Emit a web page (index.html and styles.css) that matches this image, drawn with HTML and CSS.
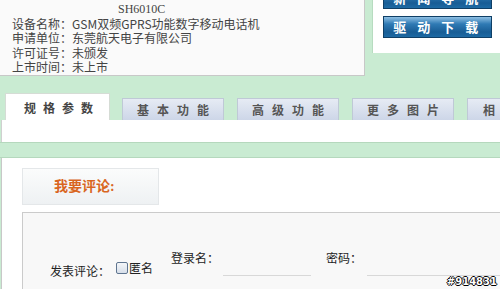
FILE: index.html
```html
<!DOCTYPE html>
<html lang="zh-CN">
<head>
    <meta charset="UTF-8">
    <title>SH6010C - 规格参数</title>
    <link rel="stylesheet" href="styles.css">
</head>
<body>
    <div class="top">
        <div class="info">
            <div class="model">SH6010C</div>
            <div>设备名称：GSM双频GPRS功能数字移动电话机</div>
            <div>申请单位：东莞航天电子有限公司</div>
            <div>许可证号：未颁发</div>
            <div>上市时间：未上市</div>
        </div>
        <div class="side">
            <a class="side-btn first">新 闻 导 航</a>
            <a class="side-btn">驱 动 下 载</a>
        </div>
    </div>

    <div class="tabs">
        <div class="tab active">规格参数</div>
        <div class="tab">基本功能</div>
        <div class="tab">高级功能</div>
        <div class="tab">更多图片</div>
        <div class="tab last">相关</div>
    </div>
    <div class="tab-body"></div>
    <div class="strip"></div>

    <div class="comment">
        <div class="comment-title">我要评论:</div>
        <div class="comment-form">
            <span class="f-label post">发表评论：</span>
            <label class="anon"><span class="check"></span>匿名</label>
            <span class="f-label login">登录名：</span>
            <span class="f-input short"></span>
            <span class="f-label pwd">密码：</span>
            <span class="f-input long"></span>
        </div>
        <div class="mark">#914831</div>
    </div>
</body>
</html>
```

FILE: styles.css
```css
body {
    margin: 0;
    width: 500px;
    height: 289px;
    overflow: hidden;
    background: #c9ebd2;
    font-family: "Noto Sans CJK SC", sans-serif;
    font-size: 12px;
    color: #333;
    position: relative;
}
.top {
    display: flex;
    align-items: flex-start;
}
.info {
    width: 353px;
    height: 73px;
    padding: 2px 0 0 12px;
    background: #fafafa;
    border-right: 1px solid #c8c8c8;
    border-bottom: 1px solid #c8c8c8;
    line-height: 14.5px;
    color: #444;
}
.info .model {
    padding-left: 106px;
    font-family: "Liberation Serif", serif;
}
.side {
    margin-left: 7px;
    width: 117px;
    height: 53px;
    padding-left: 10px;
    background: #fff;
    border-left: 1px solid #b7dcc0;
    display: flex;
    flex-direction: column;
}
.side-btn {
    display: block;
    width: 107px;
    height: 20px;
    line-height: 20px;
    border: 1px solid #0f3f66;
    background: linear-gradient(#8fc0e4, #2f7ab4 35%, #185d95 75%, #1d6aa4);
    color: #fff;
    font-weight: bold;
    font-size: 13px;
    text-align: center;
    letter-spacing: 4px;
}
.side-btn.first {
    margin-top: -13px;
    margin-bottom: 7px;
}
.tabs {
    display: flex;
    align-items: flex-end;
    gap: 13px;
    margin-top: 17px;
    padding-left: 5px;
    height: 27px;
    overflow: hidden;
}
.tab {
    flex: none;
    box-sizing: border-box;
    width: 102px;
    height: 22px;
    line-height: 22px;
    padding-left: 8px;
    background: linear-gradient(#e6ebf4, #cdd6e8);
    border: 1px solid #bfc9d6;
    border-bottom: none;
    text-align: center;
    font-weight: bold;
    font-size: 12px;
    color: #555;
    letter-spacing: 8px;
}
.tab.active {
    width: 105px;
    height: 27px;
    line-height: 27px;
    padding-left: 18px;
    background: #fff;
    border-color: #d5dcd5;
    color: #444;
    margin-right: -1px;
    text-align: left;
    letter-spacing: 7px;
}
.tab.last {
    text-align: left;
    padding-left: 15px;
}
.tab-body {
    height: 22px;
    margin-left: 1px;
    background: #fff;
    border-left: 1px solid #d0d0d0;
}
.strip {
    height: 14px;
    border-top: 1px solid #b5d8bd;
    border-bottom: 1px solid #b5d8bd;
}
.comment {
    height: 131px;
    margin-left: 1px;
    padding-left: 20px;
    background: #fff;
    border-left: 1px solid #c8c8c8;
    display: flex;
    flex-direction: column;
}
.comment-title {
    margin-top: 10px;
    width: 104px;
    height: 35px;
    line-height: 36px;
    padding-left: 31px;
    background: linear-gradient(#fbfcfc, #eef1f3);
    border: 1px solid #e4e7e9;
    color: #d9661f;
    font-family: "Liberation Serif", "Noto Sans CJK SC", serif;
    font-weight: bold;
    font-size: 14px;
}
.comment-form {
    flex: 1;
    margin-top: 7px;
    display: flex;
    align-items: flex-start;
    padding: 37px 0 0 27px;
    background: #f8f8f8;
    border-top: 1px solid #cbcbcb;
    border-left: 1px solid #cbcbcb;
    color: #222;
}
.f-label {
    line-height: 16px;
}
.f-label.post {
    margin-top: 13px;
}
.anon {
    display: flex;
    align-items: center;
    margin-top: 10px;
    margin-left: 6px;
    line-height: 16px;
}
.check {
    display: inline-block;
    width: 10px;
    height: 10px;
    margin-right: 1px;
    border: 1px solid #5f7590;
    border-radius: 2px;
    background: linear-gradient(#f4f6f9, #d7dfea);
}
.f-label.login {
    margin-left: 18px;
}
.f-input {
    height: 25px;
    border-bottom: 1px solid #d8d8d8;
}
.f-input.short {
    width: 88px;
    margin-left: 4px;
}
.f-label.pwd {
    margin-left: 15px;
}
.f-input.long {
    flex: 1;
    margin-left: 5px;
}
.mark {
    position: absolute;
    right: 3px;
    bottom: 2px;
    font-family: "DejaVu Sans", sans-serif;
    font-weight: bold;
    font-size: 10px;
    color: #fff;
    text-shadow: 1px 0 #000, -1px 0 #000, 0 1px #000, 0 -1px #000;
}
```
